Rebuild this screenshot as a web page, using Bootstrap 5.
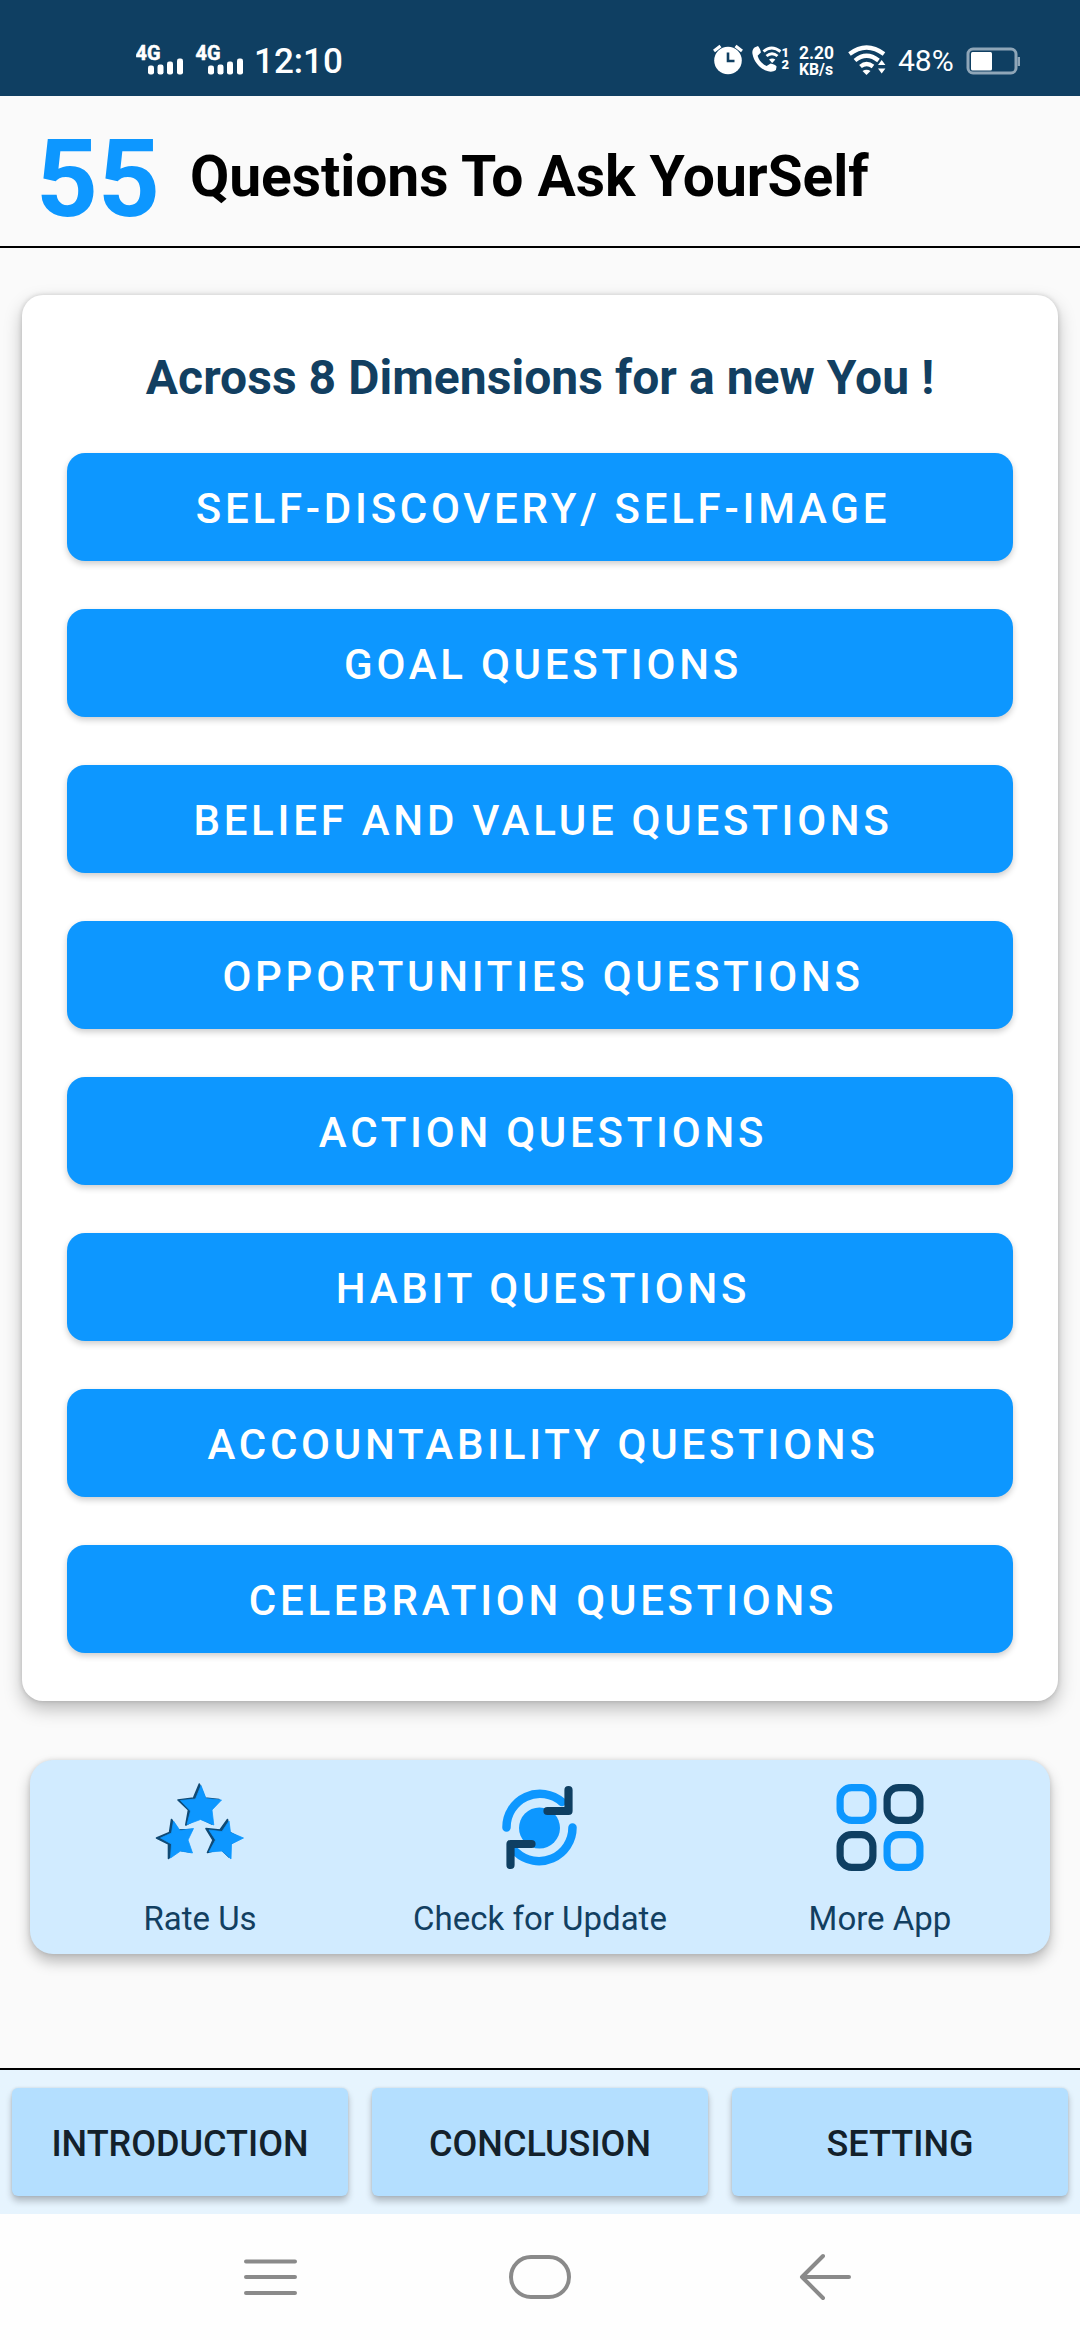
<!DOCTYPE html>
<html lang="en">
<head>
<meta charset="utf-8">
<meta name="viewport" content="width=device-width, initial-scale=1">
<title>55 Questions To Ask YourSelf</title>
<link href="https://cdn.jsdelivr.net/npm/bootstrap@5.3.0/dist/css/bootstrap.min.css" rel="stylesheet">
<style>
  :root { --navy: #0f3f62; --azure: #0d97ff; }
  body { font-family: Roboto, "Liberation Sans", sans-serif; background: #fafafa; width: 1080px; height: 2340px; overflow: hidden; line-height: 1.172; }
  svg { display: block; flex: none; }
  .status-bar { height: 96px; background: var(--navy); color: #fff; padding: 26px 0 0 136px; }
  .status-bar .clock { font-size: 35px; font-weight: 500; width: 92px; margin-left: 8px; padding-top: 3px; line-height: 72px; }
  .status-bar .percent { font-size: 30px; width: 68px; margin-left: 12px; padding-top: 2px; line-height: 70px; }
  .status-bar .item-row { height: 70px; margin-top: -1px; }
  .status-icons { font-family: Roboto, sans-serif; }
  .app-header { height: 152px; border-bottom: 2px solid #000; color: #000; padding-left: 36px; }
  .big-number { font-size: 108px; font-weight: 700; color: var(--azure); padding-top: 17px; width: 154px; }
  .app-title { font-size: 57px; font-weight: 700; margin: 0; padding-top: 12px; letter-spacing: -.08px; }
  .topics { margin: 47px 22px 0; height: 1406px; border: 0; border-radius: 21px; padding: 54px 45px 48px; box-shadow: 0 0 5px rgba(0,0,0,.16), 0 8px 18px rgba(0,0,0,.25); }
  .topics-title { font-size: 48px; font-weight: 700; color: #123f61; height: 56px; margin: 0 0 48px; line-height: 58px; letter-spacing: .05px; }
  .topics .btn-list { gap: 48px; }
  .btn-topic { height: 108px; border: 0; border-radius: 18px; font-size: 42px; font-weight: 500; letter-spacing: 3.75px; padding: 3px 0 0 6px; line-height: 1; color: #fff; background: var(--azure); box-shadow: 0 3px 6px rgba(0,0,0,.2); }
  .tools { margin: 59px 30px 0; height: 194px; border: 0; border-radius: 23px; background: #d1ebff; box-shadow: 0 0 5px rgba(0,0,0,.12), 0 8px 14px rgba(0,0,0,.25); }
  .tool-link { color: #123f61; font-size: 33px; text-decoration: none; padding-top: 14px; }
  .tool-link span { margin-top: 23px; }
  .bottom-tabs { margin-top: 114px; height: 146px; border-top: 2px solid #000; background: #e6f4fe; padding: 18px 12px; gap: 24px; }
  .btn-tab { flex: 1 1 0; height: 108px; border: 0; border-radius: 6px; padding: 4px 0 0; font-size: 36px; font-weight: 500; color: #13212b; background: #b4dfff; box-shadow: 0 0 3px rgba(0,0,0,.12), 0 5px 7px rgba(0,0,0,.24); }
  .system-nav { height: 126px; background: #fefefe; padding: 0 228px; }
</style>
</head>
<body class="d-flex flex-column">
<div class="status-bar d-flex align-items-start">
  <div class="item-row d-flex align-items-center">
    <svg class="status-icons" width="110" height="40" viewBox="0 0 110 40" fill="#fff">
      <g id="sig">
        <text x="-.5" y="19.5" font-size="20" font-weight="700" stroke="#fff" stroke-width=".5" textLength="25" lengthAdjust="spacingAndGlyphs">4G</text>
        <rect x="12" y="25.500" width="6" height="9" rx="2.200"/><rect x="21.500" y="24.500" width="6" height="10" rx="2.200"/><rect x="31" y="21.500" width="6" height="13" rx="2.200"/><rect x="41" y="18.500" width="6" height="16" rx="2.200"/>
      </g>
      <use href="#sig" x="60"/>
    </svg>
    <span class="clock">12:10</span>
  </div>
  <div class="item-row d-flex align-items-center ms-auto">
    <!-- alarm, Wi-Fi calling, network speed and Wi-Fi -->
    <svg class="status-icons" width="174" height="40" viewBox="0 0 174 40" fill="#fff">
      <circle cx="16" cy="20.500" r="13.800"/>
      <path d="M2 11 8.500 6M30 11 23.500 6" stroke="#fff" stroke-width="3.200"/>
      <path d="M16 12.500v8.500h6.500" fill="none" stroke="#0f3f62" stroke-width="2.600"/>
      <path d="M42.500 7.500 46 6c1.500 1.800 2.700 4.300 2.900 6.400l-3.300 3.400c1.200 4.500 4.700 8.300 9 10.300l4-2.500c2.400.4 4.600 1.400 6 2.800l-.7 3.600c-2.300 1.700-5 2-7.800 1.300C49 29.500 42 22.500 40.500 14c-.5-2.500.2-4.800 2-6.500z"/>
      <g fill="none" stroke="#fff" stroke-width="2.900"><path d="M51.500 11.500q8-7 17 0M54.500 16q5.500-4.500 11 0"/></g>
      <path d="M57 19.500q3.200-2 6.400 0L60.200 23z"/>
      <text x="69.500" y="16.500" font-size="13" font-weight="900">1</text><text x="69.500" y="29" font-size="13" font-weight="900">2</text>
      <text x="87" y="19" font-size="19" font-weight="700" textLength="35" lengthAdjust="spacingAndGlyphs">2.20</text>
      <text x="87" y="34.500" font-size="16" font-weight="700" textLength="34" lengthAdjust="spacingAndGlyphs">KB/s</text>
      <g fill="none" stroke="#fff" stroke-width="4.200"><path d="M137.500 14q17-13 34.500 0M143 20.500q11.500-9.500 23.500 0M148.500 26.500q6-5 12.500 0"/></g>
      <path d="M150.500 31q4-2.500 8 0l-4 4z"/><path d="m166 25 3.700-5 3.700 5zM166 28.500h7.400l-3.700 5z"/>
    </svg>
    <span class="percent">48%</span>
    <svg width="114" height="40" viewBox="0 0 114 40">
      <rect x="2" y="9" width="48" height="24" rx="5" fill="none" stroke="#8fa6b8" stroke-width="3"/>
      <path d="M52.800 17v9" stroke="#8fa6b8" stroke-width="2.400"/><rect x="5" y="12" width="21" height="18.500" rx="1.500" fill="#fff"/>
    </svg>
  </div>
</div>

<header class="app-header d-flex align-items-center">
  <div class="big-number">55</div>
  <h1 class="app-title">Questions To Ask YourSelf</h1>
</header>

<main>
  <section class="card topics">
    <h2 class="topics-title text-center">Across 8 Dimensions for a new You !</h2>
    <div class="btn-list d-flex flex-column">
      <button class="btn btn-topic w-100">SELF-DISCOVERY/ SELF-IMAGE</button>
      <button class="btn btn-topic w-100">GOAL QUESTIONS</button>
      <button class="btn btn-topic w-100">BELIEF AND VALUE QUESTIONS</button>
      <button class="btn btn-topic w-100">OPPORTUNITIES QUESTIONS</button>
      <button class="btn btn-topic w-100">ACTION QUESTIONS</button>
      <button class="btn btn-topic w-100">HABIT QUESTIONS</button>
      <button class="btn btn-topic w-100">ACCOUNTABILITY QUESTIONS</button>
      <button class="btn btn-topic w-100">CELEBRATION QUESTIONS</button>
    </div>
  </section>

  <section class="card tools">
    <div class="row g-0">
      <a class="tool-link col-4 d-flex flex-column align-items-center" href="#">
        <svg width="108" height="103" viewBox="146 1774 108 103">
          <g fill="#104a75" stroke="#104a75" stroke-width="1.600" stroke-linejoin="round">
            <path d="M199.300 1784 193.500 1798 178 1800 188.500 1810 185.800 1825 199 1817.500 212 1824 210 1810 219 1799.500 205 1798z"/>
            <path d="M171.500 1819.500 169.500 1832.500 156.500 1838 168.500 1844 168.500 1858.500 178 1850 190 1852 185 1840 192 1829.500 178 1830z"/>
            <path d="M227.500 1819.500 220 1830 206 1828.500 213 1840 207.500 1852.500 220.500 1849 229 1857 230 1844 240 1838 229 1832z"/>
          </g>
          <g fill="#0d97ff" stroke="#0d97ff" stroke-width=".8" stroke-linejoin="round">
            <path d="M201 1785.500 206 1798.500 221.500 1800 212 1810 213.800 1825 200.500 1819.500 187 1824.500 190.500 1811 180.500 1800.500 195.500 1799z"/>
            <path d="M173.500 1821 180 1830.500 193.500 1828.500 188 1840 192.500 1853 180.500 1851 170.500 1858 171.500 1844 160.500 1838 171.500 1833z"/>
            <path d="M229 1821 230.500 1832.500 243.500 1838 231.500 1844 231 1859 222 1851 209 1852 215.500 1840 209 1830 222 1831.500z"/>
          </g>
        </svg>
        <span>Rate Us</span>
      </a>
      <a class="tool-link col-4 d-flex flex-column align-items-center" href="#">
        <svg width="108" height="103" viewBox="486 1774 108 103" fill="none" stroke-linecap="round" stroke-linejoin="round">
          <circle cx="539.500" cy="1828" r="20.500" fill="#0d97ff"/>
          <g stroke="#0d97ff" stroke-width="8.500"><path d="M506.500 1827.500A33.500 33.500 0 0 1 562 1802"/><path d="M572.500 1827.500A33.500 33.500 0 0 1 516 1852"/></g>
          <g stroke="#0f3f62" stroke-width="8.200"><path d="M547.500 1811H568.500V1790"/><path d="M531.500 1844H510.500V1865"/></g>
        </svg>
        <span>Check for Update</span>
      </a>
      <a class="tool-link col-4 d-flex flex-column align-items-center" href="#">
        <svg width="108" height="103" viewBox="825.500 1774 108 103" fill="none" stroke-width="7.200">
          <rect x="839.600" y="1787.600" width="32.800" height="32.800" rx="11.500" stroke="#0d97ff"/>
          <rect x="886.600" y="1787.600" width="32.800" height="32.800" rx="11.500" stroke="#0f3f62"/>
          <rect x="839.600" y="1834.600" width="32.800" height="32.800" rx="11.500" stroke="#0f3f62"/>
          <rect x="886.600" y="1834.600" width="32.800" height="32.800" rx="11.500" stroke="#0d97ff"/>
        </svg>
        <span>More App</span>
      </a>
    </div>
  </section>
</main>

<nav class="bottom-tabs d-flex">
  <button class="btn btn-tab">INTRODUCTION</button>
  <button class="btn btn-tab">CONCLUSION</button>
  <button class="btn btn-tab">SETTING</button>
</nav>

<footer class="system-nav d-flex justify-content-between align-items-center">
  <svg width="84" height="60" viewBox="0 0 84 60" stroke="#8a8a8a" stroke-width="4" stroke-linecap="round"><path d="M18 14.500H67M18 30H67M18 46H67"/></svg>
  <svg width="84" height="60" viewBox="0 0 84 60" fill="none" stroke="#8a8a8a" stroke-width="4"><rect x="13" y="10" width="58" height="40" rx="20"/></svg>
  <svg width="84" height="60" viewBox="0 0 84 60" fill="none" stroke="#8a8a8a" stroke-width="4" stroke-linecap="round" stroke-linejoin="round"><path d="M81 30H34M55 9 34 30 55 51"/></svg>
</footer>
<script src="https://cdn.jsdelivr.net/npm/bootstrap@5.3.0/dist/js/bootstrap.bundle.min.js"></script>
</body>
</html>
